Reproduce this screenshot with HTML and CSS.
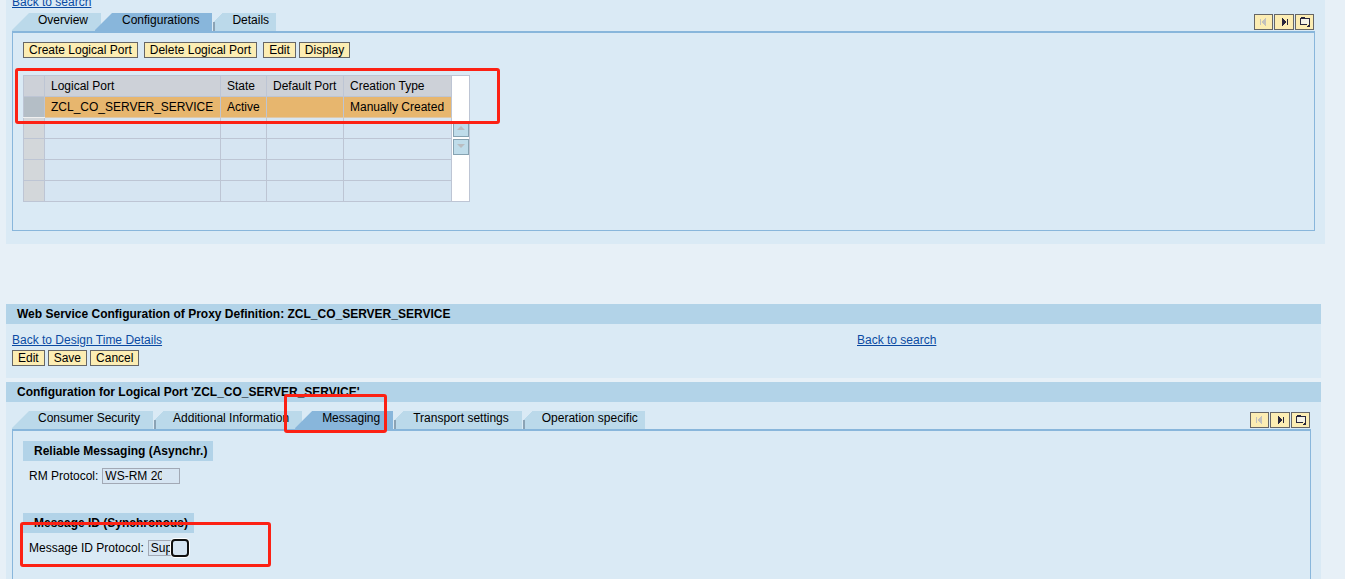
FILE: index.html
```html
<!DOCTYPE html>
<html lang="en">
<head>
<meta charset="utf-8">
<title>Web Service Configuration</title>
<link rel="stylesheet" href="styles.css">
</head>
<body>
<section class="panel panel-details">
  <a class="link" href="#">Back to search</a>
  <div class="tab-row">
    <nav class="tabs">
      <button class="tab slanted">Overview</button>
      <button class="tab slanted active overlap">Configurations</button>
      <button class="tab notched last">Details</button>
    </nav>
    <div class="pager">
      <button class="icon-btn" aria-label="First" disabled><svg width="16" height="12" viewBox="0 0 16 12" shape-rendering="crispEdges"><path fill="#c3c1bd" d="M4 3h1v6H4zM10 2v8H9V9H8V8H7V7H6V5h1V4h1V3h1V2z"/></svg></button>
      <button class="icon-btn wide" aria-label="Last"><svg width="16" height="12" viewBox="0 0 16 12" shape-rendering="crispEdges"><path fill="#28263c" d="M6 2h1v1h1v1h1v1h1v2H9v1H8v1H7v1H6zM11 3h1v6h-1z"/></svg></button>
      <button class="icon-btn" aria-label="Tab list"><svg width="16" height="12" viewBox="0 0 16 12" shape-rendering="crispEdges"><path fill="#f4f2e6" d="M4 3h8v5H4z"/><path fill="#28263c" d="M4 1h4v1h5v6h-1V3H4v5h6v1H3V2h1zM12 8h1v3h-3v-1h1V9h1z"/></svg></button>
    </div>
  </div>
  <div class="tab-body">
    <div class="toolbar">
      <button class="btn">Create Logical Port</button>
      <button class="btn">Delete Logical Port</button>
      <div class="btn-group">
        <button class="btn">Edit</button>
        <button class="btn">Display</button>
      </div>
    </div>
    <div class="port-list">
      <table class="ports">
        <colgroup><col class="c-select"><col class="c-port"><col class="c-state"><col class="c-default"><col class="c-type"></colgroup>
        <thead>
          <tr><th></th><th>Logical Port</th><th>State</th><th>Default Port</th><th>Creation Type</th></tr>
        </thead>
        <tbody>
          <tr class="selected"><td></td><td>ZCL_CO_SERVER_SERVICE</td><td>Active</td><td></td><td>Manually Created</td></tr>
          <tr><td></td><td></td><td></td><td></td><td></td></tr>
          <tr><td></td><td></td><td></td><td></td><td></td></tr>
          <tr><td></td><td></td><td></td><td></td><td></td></tr>
          <tr><td></td><td></td><td></td><td></td><td></td></tr>
        </tbody>
      </table>
      <div class="scroller">
        <button class="scroll-btn" aria-label="Scroll up" disabled><svg width="14" height="14" viewBox="0 0 14 14"><path fill="#b9bcc0" d="M3 8 7 4l4 4z"/></svg></button>
        <button class="scroll-btn" aria-label="Scroll down" disabled><svg width="14" height="14" viewBox="0 0 14 14"><path fill="#b9bcc0" d="M3 4h8L7 8z"/></svg></button>
      </div>
      <div class="mark mark-ports"></div>
    </div>
  </div>
</section>

<section class="panel panel-service">
  <h2 class="title">Web Service Configuration of Proxy Definition: ZCL_CO_SERVER_SERVICE</h2>
  <div class="links">
    <a class="link" href="#">Back to Design Time Details</a>
    <a class="link" href="#">Back to search</a>
  </div>
  <div class="btn-group actions">
    <button class="btn">Edit</button>
    <button class="btn">Save</button>
    <button class="btn">Cancel</button>
  </div>
</section>

<section class="panel panel-port">
  <h2 class="title">Configuration for Logical Port 'ZCL_CO_SERVER_SERVICE'</h2>
  <div class="tab-row">
    <nav class="tabs">
      <button class="tab slanted">Consumer Security</button>
      <button class="tab notched">Additional Information</button>
      <div class="marked-tab">
        <button class="tab slanted active">Messaging</button>
        <div class="mark mark-tab"></div>
      </div>
      <button class="tab notched">Transport settings</button>
      <button class="tab notched last">Operation specific</button>
    </nav>
    <div class="pager">
      <button class="icon-btn" aria-label="First" disabled><svg width="16" height="12" viewBox="0 0 16 12" shape-rendering="crispEdges"><path fill="#c3c1bd" d="M4 3h1v6H4zM10 2v8H9V9H8V8H7V7H6V5h1V4h1V3h1V2z"/></svg></button>
      <button class="icon-btn wide" aria-label="Last"><svg width="16" height="12" viewBox="0 0 16 12" shape-rendering="crispEdges"><path fill="#28263c" d="M6 2h1v1h1v1h1v1h1v2H9v1H8v1H7v1H6zM11 3h1v6h-1z"/></svg></button>
      <button class="icon-btn" aria-label="Tab list"><svg width="16" height="12" viewBox="0 0 16 12" shape-rendering="crispEdges"><path fill="#f4f2e6" d="M4 3h8v5H4z"/><path fill="#28263c" d="M4 1h4v1h5v6h-1V3H4v5h6v1H3V2h1zM12 8h1v3h-3v-1h1V9h1z"/></svg></button>
    </div>
  </div>
  <div class="tab-body">
    <div class="group">
      <h3 class="subtitle">Reliable Messaging (Asynchr.)</h3>
      <div class="field">
        <label for="rm">RM Protocol:</label>
        <input id="rm" class="input rm" value="WS-RM 2005" readonly>
      </div>
    </div>
    <div class="group">
      <h3 class="subtitle">Message ID (Synchronous)</h3>
      <div class="field">
        <label for="mid">Message ID Protocol:</label>
        <div class="combo">
          <input id="mid" class="input mid" value="Suppress" readonly>
          <button class="picker" aria-label="Choose protocol"></button>
        </div>
      </div>
      <div class="mark mark-mid"></div>
    </div>
  </div>
</section>
</body>
</html>
```
FILE: styles.css
```css
* { box-sizing: border-box; }

html { overflow: hidden; }

body {
  margin: 0;
  padding: 0 20px 0 6px;
  min-height: 100vh;
  display: flex;
  flex-direction: column;
  background: #e7f0f7;
  color: #000;
  font: 12px/14px "Liberation Sans", Arial, sans-serif;
}

button, input { font: inherit; color: inherit; margin: 0; }

.panel { background: #daeaf5; }

/* The page is scrolled a little, so the first line is cut by the top edge. */
.panel-details {
  margin-top: -5px;
  padding: 0 10px 13px 6px;
}
.panel-details .tab-row { margin-top: 4px; }
.panel-details .tab-body { padding-bottom: 28px; border-bottom: 1px solid #88b6db; }

.panel-service { margin: 60px 4px 4px 0; padding-bottom: 12px; }

.panel-port {
  flex: 1;
  margin-right: 4px;
  display: flex;
  flex-direction: column;
}
.panel-port .tab-row { margin: 9px 10px 0 6px; }
.panel-port .tab-body { flex: 1; margin: 0 10px 0 6px; }

.title {
  margin: 0;
  padding-left: 11px;
  font-size: 12px;
  line-height: 20px;
  background: #b2d3e8;
}

.link { display: block; color: #0b4aa2; }

.links {
  display: grid;
  grid-template-columns: 845px 1fr;
  justify-items: start;
  padding: 9px 0 3px 6px;
}

.tab-row {
  display: flex;
  justify-content: space-between;
  align-items: flex-start;
  border-bottom: 2px solid #88b6db;
}
.tabs { display: flex; }

.tab {
  display: block;
  position: relative;
  border: 0;
  padding: 0 13px 4px 19px;
  background: #bbd9ea;
  white-space: nowrap;
}
.tab.slanted {
  padding-left: 27px;
  clip-path: polygon(17px 0, 100% 0, 100% 100%, 0 100%, 0 17px);
}
.tab.slanted:first-child { padding-left: 26px; }
.tab.active { background: #88b6db; }
.tab.overlap, .marked-tab { margin-left: -6px; }
.marked-tab { margin-left: -7px; }
.tab.notched {
  margin-left: 1px;
  background: linear-gradient(135deg, #daeaf5 7px, #bbd9ea 7px);
}
.tab.notched::before {
  content: "";
  position: absolute;
  left: 0;
  bottom: 0;
  width: 2px;
  height: 9px;
  background: #8ba3b5;
}
.tab.last { padding-right: 7px; }

.marked-tab { position: relative; }
.marked-tab .tab.slanted { padding-left: 27px; }

.pager { display: flex; gap: 1px; padding: 1px 1px 0 0; }
.icon-btn {
  width: 19px;
  height: 16px;
  padding: 0;
  border: 1px solid #666;
  outline: 0;
  background: #fcedb3;
  display: grid;
  place-items: center;
}
.icon-btn.wide { width: 20px; }

.tab-body {
  border: 1px solid #88b6db;
  border-width: 0 1px;
  padding: 9px 10px 0;
}

.toolbar { display: flex; gap: 6px; }
.btn-group { display: flex; gap: 3px; }
.actions { padding-left: 6px; }

.btn {
  border: 1px solid #666;
  padding: 0 5px;
  background: #fcedb3;
  white-space: nowrap;
}

.port-list {
  position: relative;
  display: flex;
  margin-top: 17px;
}
.ports {
  table-layout: fixed;
  width: 429px;
  border-collapse: collapse;
}
.ports th, .ports td {
  height: 21px;
  padding: 0 0 0 6px;
  border: 1px solid #bdc5d4;
  background: #d6e5f2;
  font-weight: normal;
  line-height: 20px;
  text-align: left;
  white-space: nowrap;
}
.ports th { background: #cdd1d8; }
.ports td:first-child { background: #d3d7da; }
.ports .selected td { background: #e7b66e; border-bottom-color: #e0c8a8; }
.ports .selected td:first-child { background: #b4bec6; border-bottom-color: #f0f0f0; }
.c-select { width: 21px; }
.c-port { width: 176px; }
.c-state { width: 46px; }
.c-default { width: 77px; }
.c-type { width: 108px; }

.scroller {
  width: 18px;
  display: flex;
  flex-direction: column;
  align-items: center;
  justify-content: center;
  gap: 2px;
  padding-bottom: 2px;
  background: #fff;
  border: 1px solid #bdc5d4;
  border-left: 0;
}
.scroll-btn {
  width: 16px;
  height: 16px;
  padding: 0;
  border: 1px solid #86a2b1;
  background: #bfdcea;
}
.scroll-btn svg { display: block; }

/* Red frames drawn over the page */
.mark {
  position: absolute;
  border: 3px solid #fc2114;
  border-radius: 3px;
  pointer-events: none;
}
.mark-ports { left: -8px; top: -7px; width: 485px; height: 56px; }
.mark-tab { left: -11px; top: -17px; width: 103px; height: 39px; z-index: 1; }
.mark-mid { left: -3px; top: 9px; width: 251px; height: 45px; }

.group { position: relative; margin-bottom: 29px; }
.panel-port .tab-body { padding-top: 10px; }
.subtitle {
  width: fit-content;
  margin: 0 0 7px;
  padding: 0 6px 0 11px;
  font-size: 12px;
  line-height: 20px;
  background: #b2d3e8;
}
.field {
  display: flex;
  align-items: center;
  gap: 4px;
  padding-left: 6px;
}
.input {
  height: 16px;
  padding: 0 17px 0 2px;
  border: 1px solid #a2a9b5;
  border-radius: 0;
  background: #d6e5f2;
}
.rm { width: 78px; }
.mid { width: 23px; padding-right: 0; border-right: 0; }
.combo { display: flex; align-items: center; height: 16px; }
.picker {
  width: 18px;
  height: 18px;
  padding: 0;
  border: 2px solid #101010;
  border-radius: 4px;
  background: #d6e5f2;
  box-shadow: 0 0 0 1px #fff;
}
```
